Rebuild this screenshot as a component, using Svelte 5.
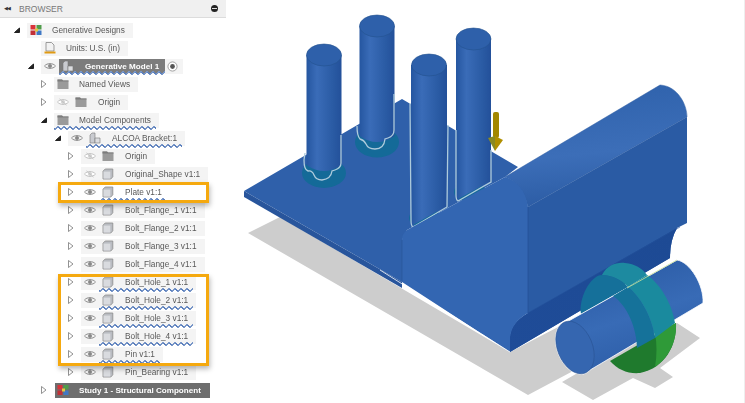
<script>
  const rows = [
    { lvl: 0, arrow: 'open', icon: 'gen', label: 'Generative Designs' },
    { lvl: 1, arrow: '', icon: 'doc', label: 'Units: U.S. (in)' },
    { lvl: 1, arrow: 'open', eye: 'on', icon: 'comp', label: 'Generative Model 1', kind: 'gm' },
    { lvl: 2, arrow: 'closed', icon: 'folder', label: 'Named Views' },
    { lvl: 2, arrow: 'closed', eye: 'off', icon: 'folder', label: 'Origin' },
    { lvl: 2, arrow: 'open', icon: 'folder', label: 'Model Components', wave: true },
    { lvl: 3, arrow: 'open', eye: 'on', icon: 'comp', label: 'ALCOA Bracket:1', wave: true },
    { lvl: 4, arrow: 'closed', eye: 'off', icon: 'folder', label: 'Origin' },
    { lvl: 4, arrow: 'closed', eye: 'off', icon: 'box', label: 'Original_Shape v1:1' },
    { lvl: 4, arrow: 'closed', eye: 'on', icon: 'box', label: 'Plate v1:1', wave: true, kind: 'plain' },
    { lvl: 4, arrow: 'closed', eye: 'on', icon: 'box', label: 'Bolt_Flange_1 v1:1' },
    { lvl: 4, arrow: 'closed', eye: 'on', icon: 'box', label: 'Bolt_Flange_2 v1:1' },
    { lvl: 4, arrow: 'closed', eye: 'on', icon: 'box', label: 'Bolt_Flange_3 v1:1' },
    { lvl: 4, arrow: 'closed', eye: 'on', icon: 'box', label: 'Bolt_Flange_4 v1:1' },
    { lvl: 4, arrow: 'closed', eye: 'on', icon: 'box', label: 'Bolt_Hole_1 v1:1', wave: true },
    { lvl: 4, arrow: 'closed', eye: 'on', icon: 'box', label: 'Bolt_Hole_2 v1:1', wave: true },
    { lvl: 4, arrow: 'closed', eye: 'on', icon: 'box', label: 'Bolt_Hole_3 v1:1', wave: true },
    { lvl: 4, arrow: 'closed', eye: 'on', icon: 'box', label: 'Bolt_Hole_4 v1:1', wave: true },
    { lvl: 4, arrow: 'closed', eye: 'on', icon: 'box', label: 'Pin v1:1', wave: true },
    { lvl: 4, arrow: 'closed', eye: 'on', icon: 'box', label: 'Pin_Bearing v1:1' },
    { lvl: 2, arrow: 'closed', icon: 'gen', label: 'Study 1 - Structural Component', kind: 'study' }
  ];
  const indent = [13, 27, 40, 54, 67];
</script>

{#snippet arrowIcon(type)}
  {#if type === 'open'}
    <svg class="arrow" viewBox="0 0 8 8"><path d="M6.500 2V6.500H1.500Z" fill="#222" stroke="#222"/></svg>
  {:else if type === 'closed'}
    <svg class="arrow" viewBox="0 0 8 8"><path d="M1.500 0.500V7.500L6 4Z" fill="#fff" stroke="#777" stroke-width="0.8"/></svg>
  {:else}
    <span class="arrow"></span>
  {/if}
{/snippet}

{#snippet eyeIcon(state)}
  <svg class="eye" viewBox="0 0 12 8">
    <path d="M0.500 4C3 0.800 9 0.800 11.500 4C9 7.200 3 7.200 0.500 4Z" fill={state === 'off' ? '#fff' : '#f2f2f2'} stroke={state === 'off' ? '#c0c0c0' : '#8c8c8c'} stroke-width="1"/>
    <circle cx="6" cy="4" r="2" fill={state === 'off' ? '#d0d0d0' : '#888'}/>
    {#if state === 'off'}<path d="M2.500 0.800L9.500 7.200" stroke="#c0c0c0" stroke-width="0.8"/>{/if}
  </svg>
{/snippet}

{#snippet nodeIcon(type)}
  <svg class="icon" viewBox="0 0 12 12">
    {#if type === 'folder'}
      <path d="M0.500 1.500H5L6 2.500H11.500V11H0.500Z" fill="#9a9a9a"/>
      <path d="M0.500 1.500H5L6 2.500H11.500V3.500H0.500Z" fill="#7c7c7c"/>
    {:else if type === 'box'}
      <path d="M1 3.200L3.200 1H10.800V8.800L8.800 11H1Z" fill="#b9bcc2" stroke="#8a8a8a" stroke-width="0.8" stroke-linejoin="round"/>
      <rect x="1.500" y="3.600" width="6.800" height="7" fill="#d9dbdf"/>
    {:else if type === 'gen'}
      <rect x="0.500" y="1" width="5" height="4.500" fill="#d9333a"/>
      <rect x="6.500" y="1" width="5" height="4.500" fill="#4f9c4a"/>
      <rect x="0.500" y="6.500" width="5" height="4.500" fill="#c23037"/>
      <rect x="6.500" y="6.500" width="5" height="4.500" fill="#3f78c4"/>
      <rect x="5" y="4.500" width="3" height="3" fill="#e7c63e"/>
    {:else if type === 'doc'}
      <path d="M2 0.500H7.500L10 3V9H2Z" fill="#f2f2f2" stroke="#777" stroke-width="0.7"/>
      <rect x="0.500" y="9.500" width="11" height="2" fill="#e09a12"/>
    {:else}
      <path d="M1 3L3 1H6V11H1Z" fill="#c9cbd0" stroke="#777" stroke-width="0.6"/>
      <path d="M6 6H11V11H6Z" fill="#dcdde0" stroke="#777" stroke-width="0.6"/>
    {/if}
  </svg>
{/snippet}

<div class="page">
  <aside class="browser">
    <header class="bar">
      <span class="rewind">◀◀</span>
      <span class="title">BROWSER</span>
      <span class="minus"></span>
    </header>
    <ul class="tree">
      {#each rows as r}
        <li class="row" style="padding-left:{indent[r.lvl]}px">
          {@render arrowIcon(r.arrow)}
          <div class="chip {r.kind ?? ''}">
            {#if r.eye}<span class="eyebox">{@render eyeIcon(r.eye)}</span>{/if}
            {#if r.kind === 'gm'}
              <span class="modelbar wave">
                {@render nodeIcon(r.icon)}
                <span class="label">{r.label}</span>
              </span>
              <svg class="radio" viewBox="0 0 12 12"><circle cx="6" cy="6" r="5" fill="#fff" stroke="#999"/><circle cx="6" cy="6" r="2.600" fill="#555"/></svg>
            {:else}
              <span class="inner" class:wave={r.wave} class:noeye={!r.eye}>
                {@render nodeIcon(r.icon)}
                <span class="label">{r.label}</span>
              </span>
            {/if}
          </div>
        </li>
      {/each}
    </ul>
    <div class="mark plate-mark"></div>
    <div class="mark holes-mark"></div>
  </aside>

  <svg class="scene" viewBox="228 0 517 403" aria-label="3D bracket model">
    <defs>
      <linearGradient id="cyl" x1="0" x2="1" y1="0" y2="0">
        <stop offset="0" stop-color="#2556a0"/>
        <stop offset="0.3" stop-color="#3a6cb8"/>
        <stop offset="0.75" stop-color="#2a5ba4"/>
        <stop offset="1" stop-color="#23509a"/>
      </linearGradient>
      <linearGradient id="roll" x1="0.45" x2="0.6" y1="0" y2="1">
        <stop offset="0" stop-color="#2f62ac"/>
        <stop offset="0.55" stop-color="#3c6eb8"/>
        <stop offset="1" stop-color="#2a5aa2"/>
      </linearGradient>
      <linearGradient id="lip" x1="0" x2="1" y1="1" y2="0">
        <stop offset="0" stop-color="#1f4c98"/>
        <stop offset="1" stop-color="#1d4a94"/>
      </linearGradient>
      <linearGradient id="hcyl" x1="0.3" x2="0.7" y1="0" y2="1">
        <stop offset="0" stop-color="#2a5aa4"/>
        <stop offset="0.5" stop-color="#386bb6"/>
        <stop offset="1" stop-color="#2a5aa4"/>
      </linearGradient>
    </defs>

    <path d="M744.500 0V403" stroke="#eeeeee"/>

    <!-- ground shadow -->
    <path d="M248 233L280 217L510 352L560 326L590 362L528 395Z" fill="#cdcdcd"/>
    <path d="M562 382L593 400L633 378L655 388L673 377L660 368L700 338L677 323L600 360Z" fill="#cdcdcd"/>

    <!-- plate -->
    <path d="M244 191L402 99L518 167L505 177L407 230L402 240V282Z" fill="#2f60aa"/>
    <path d="M244 191V197L402 288V282Z" fill="#28559c"/>

    <!-- pin 2 -->
    <ellipse cx="377" cy="142" rx="22" ry="15.500" fill="#146a98"/>
    <path d="M359.500 26V136Q377 148 394.500 136V26Z" fill="url(#cyl)"/>
    <ellipse cx="377" cy="26" rx="17.500" ry="11" fill="#2e60aa" stroke="#24528f" stroke-width="0.6"/>
    <path d="M394 94V130Q394 136 388 138L385 139Q384 149 375 149Q368 149 366 144Q364 140 360 139Q357 136 357 126" fill="none" stroke="#aecbdc" stroke-width="1.300"/>

    <!-- pin 1 -->
    <ellipse cx="324" cy="173" rx="22" ry="15" fill="#146a98"/>
    <path d="M306.500 55V165Q324 177 341.500 165V55Z" fill="url(#cyl)"/>
    <ellipse cx="324" cy="55" rx="17.500" ry="11" fill="#2e60aa" stroke="#24528f" stroke-width="0.6"/>
    <path d="M341 135V163Q341 168 335 170L332 171Q331 179 322 180Q316 180 314 175Q312 170 308 171Q304 170 304 160L305 153" fill="none" stroke="#aecbdc" stroke-width="1.300"/>

    <!-- pin 3 -->
    <ellipse cx="425" cy="218" rx="16" ry="10" fill="#146a98"/>
    <path d="M411 65V226L447 206V65Z" fill="url(#cyl)"/>
    <ellipse cx="429" cy="65" rx="17.500" ry="11" fill="#2e60aa" stroke="#24528f" stroke-width="0.6"/>

    <!-- pin 4 -->
    <ellipse cx="470" cy="192" rx="16" ry="10" fill="#146a98"/>
    <path d="M456 39V200L491 181V39Z" fill="url(#cyl)"/>
    <ellipse cx="473.500" cy="39" rx="17.500" ry="11" fill="#2e60aa" stroke="#24528f" stroke-width="0.6"/>

    <path d="M410 103L411 220Q411 226 413 227L447 207L448 125" fill="none" stroke="#aecbdc" stroke-width="1.300"/>
    <path d="M456 130V195Q456 200 458 201L491 182V150" fill="none" stroke="#aecbdc" stroke-width="1.300"/>

    <!-- load arrow -->
    <rect x="493" y="112" width="6" height="26" rx="2" fill="#a38700"/>
    <path d="M488 138L495 151V136Z" fill="#8a8a22"/>
    <path d="M495 136L503 140L495 151Z" fill="#b08f00"/>

    <!-- bracket block -->
    <path d="M528 207L687 117V223L677 228Q670 240 670 258L510 352V337Q510 325 528 313Z" fill="#2a5ba4"/>
    <path d="M528 313L677 228Q670 240 670 258L510 352V337Q510 323 528 313Z" fill="url(#lip)"/>
    <path d="M505 177L660 85C678 86 687 105 687 117L528 207C524 190 516 181 505 177Z" fill="url(#roll)" stroke="#2a5aa0" stroke-width="0.5"/>
    <path d="M402 282V240Q402 234 407 230L505 177C518 181 526 192 528 207V313Q512 322 510 337V352Z" fill="#3366b2"/>
    <path d="M402 240V282" stroke="#285699" stroke-width="0.7"/>
    <path d="M528 207V313" stroke="#234f96" stroke-width="0.7"/>
    <path d="M380 270L510 352" stroke="#fff" stroke-width="0.8"/>
    <path d="M528 313L680 227" stroke="#23509a" stroke-width="0.6"/>

    <!-- green bearing below shaft -->
    <path d="M610 361L676 323C677 345 665 368 640 373C628 374 618 370 610 361Z" fill="#1f7a2d"/>
    <path d="M655 333L676 323C677 342 668 358 655 367C657 355 657 344 655 333Z" fill="#2f9a38"/>

    <!-- teal bearing above shaft -->
    <path d="M581 314C578 300 590 275 602 275C612 275 622 280 628 287Z" fill="#15709a"/>
    <path d="M602 275C607 265 617 262 625 263C635 264 642 268 647 275L628 287C622 280 612 275 602 275Z" fill="#1d8aa0"/>

    <!-- shaft -->
    <ellipse cx="575" cy="347.500" rx="18.300" ry="28.300" transform="rotate(-22 575 347.500)" fill="#fff"/>
    <path d="M565 323L677 260C690 262 704 285 703 303L585 373Z" fill="url(#hcyl)" stroke="#fff" stroke-width="0.8"/>
    <path d="M613 296L628 287C640 296 652 316 655 338L637 348C637 330 628 306 613 296Z" fill="#15729a"/>
    <path d="M628 287L647 275C660 284 672 303 675 323L655 338C652 316 640 296 628 287Z" fill="#1a8a9e"/>
    <path d="M627 288L677 260" stroke="#cfe59a" stroke-width="0.8"/>
    <ellipse cx="575" cy="347.500" rx="17.500" ry="27.500" transform="rotate(-22 575 347.500)" fill="#3566b0" stroke="#2a5494" stroke-width="0.6"/>
  </svg>
</div>

<style>
  :global(body) {
    margin: 0;
    background: #fff;
  }
  .page {
    width: 745px;
    height: 403px;
    display: grid;
    grid-template-columns: 228px 517px;
    overflow: hidden;
    position: relative;
    font-family: "Liberation Sans", Arial, sans-serif;
  }
  .browser {
    position: relative;
    filter: blur(0.35px);
  }
  .bar {
    width: 226px;
    height: 18px;
    display: flex;
    align-items: center;
    background: #f0f0f0;
    border-bottom: 1px solid #dcdcdc;
    padding: 0 8px 0 4px;
    box-sizing: border-box;
    color: #777;
    font-size: 8.500px;
  }
  .rewind {
    font-size: 4.500px;
    letter-spacing: -1px;
    color: #333;
    width: 15px;
  }
  .title {
    flex: 1;
  }
  .minus {
    width: 7px;
    height: 7px;
    border-radius: 50%;
    background: #222;
    position: relative;
  }
  .minus::after {
    content: "";
    position: absolute;
    left: 1px;
    right: 1px;
    top: 3px;
    height: 1px;
    background: #ddd;
  }
  .tree {
    list-style: none;
    margin: 3px 0 0;
    padding: 0;
  }
  .row {
    height: 18px;
    display: flex;
    align-items: center;
  }
  .arrow {
    width: 8px;
    height: 8px;
    margin-right: 6px;
    flex: none;
    display: block;
  }
  .chip {
    height: 15px;
    display: flex;
    align-items: center;
    padding: 0 8px 0 3px;
    background: #f4f4f4;
    color: #585858;
    font-size: 8.300px;
    white-space: nowrap;
  }
  .chip.plain {
    background: transparent;
  }
  .chip.study {
    background: #6e6e6e;
    color: #fff;
    font-weight: 700;
    font-size: 8.100px;
    padding: 0 9px 0 2px;
    margin-left: 1px;
  }
  .eyebox {
    width: 12px;
    margin-right: 6px;
    display: flex;
    flex: none;
  }
  .eye {
    width: 12px;
    height: 8px;
  }
  .inner {
    display: flex;
    align-items: center;
    height: 15px;
    position: relative;
  }
  .icon {
    width: 12px;
    height: 12px;
    flex: none;
    margin-right: 11px;
  }
  .noeye .icon {
    margin-right: 10px;
  }
  .label {
    line-height: 15px;
  }
  .modelbar {
    display: flex;
    align-items: center;
    height: 14px;
    background: #7c7c7c;
    color: #fff;
    font-weight: 700;
    font-size: 8.100px;
    padding: 0 6px 0 3px;
    position: relative;
    margin-left: -3px;
    margin-right: 2px;
  }
  .chip.gm {
    padding-right: 5px;
  }
  .radio {
    width: 11px;
    height: 11px;
    flex: none;
  }
  .wave::after {
    content: "";
    position: absolute;
    left: -3px;
    right: -5px;
    bottom: -2px;
    height: 4px;
    background-image:
      linear-gradient(135deg, transparent 40%, #7896c8 40% 60%, transparent 60%),
      linear-gradient(45deg, transparent 40%, #5c80bd 40% 60%, transparent 60%);
    background-size: 6px 4px;
    background-position: 0 0, 3px 0;
    background-repeat: repeat-x;
  }
  .modelbar.wave::after {
    left: 0;
    right: 0;
  }
  .mark {
    position: absolute;
    left: 57.500px;
    width: 151px;
    box-sizing: border-box;
    border: 3px solid #f5a90f;
    box-shadow: 1px 3px 5px rgba(0, 0, 0, 0.28);
  }
  .plate-mark {
    top: 182px;
    height: 21px;
  }
  .holes-mark {
    top: 273.500px;
    height: 92.500px;
  }
  .scene {
    width: 517px;
    height: 403px;
    display: block;
    filter: blur(0.3px);
  }
</style>
